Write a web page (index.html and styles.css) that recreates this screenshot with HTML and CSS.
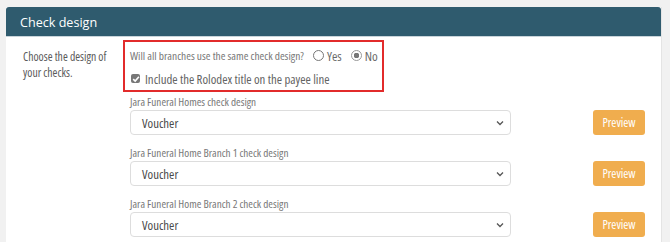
FILE: index.html
```html
<!DOCTYPE html>
<html>
<head>
<meta charset="utf-8">
<link rel="stylesheet" href="styles.css">
</head>
<body>
<div class="card">
  <div class="card-header">Check design</div>
  <div class="card-body">
    <div class="side-label">Choose the design of your checks.</div>
    <div class="main">
      <div class="highlight">
        <div class="q-row">
          <span class="q-text">Will all branches use the same check design?</span>
          <span class="radio-opt"><span class="radio"></span>Yes</span>
          <span class="radio-opt"><span class="radio checked"></span>No</span>
        </div>
        <div class="cb-row">
          <span class="checkbox"><svg width="8" height="8" viewBox="0 0 8 8"><path d="M1.2 4.2 L3.2 6.1 L6.9 1.8" fill="none" stroke="#fff" stroke-width="1.6"/></svg></span>
          <span class="cb-text">Include the Rolodex title on the payee line</span>
        </div>
      </div>
      <div class="group">
        <div class="g-label">Jara Funeral Homes check design</div>
        <div class="g-row">
          <div class="select"><span>Voucher</span><svg class="chev" width="8" height="6" viewBox="0 0 8 6"><path d="M1 1.5 L4 4.5 L7 1.5" fill="none" stroke="#555" stroke-width="1.3"/></svg></div>
          <button class="btn">Preview</button>
        </div>
      </div>
      <div class="group">
        <div class="g-label">Jara Funeral Home Branch 1 check design</div>
        <div class="g-row">
          <div class="select"><span>Voucher</span><svg class="chev" width="8" height="6" viewBox="0 0 8 6"><path d="M1 1.5 L4 4.5 L7 1.5" fill="none" stroke="#555" stroke-width="1.3"/></svg></div>
          <button class="btn">Preview</button>
        </div>
      </div>
      <div class="group">
        <div class="g-label">Jara Funeral Home Branch 2 check design</div>
        <div class="g-row">
          <div class="select"><span>Voucher</span><svg class="chev" width="8" height="6" viewBox="0 0 8 6"><path d="M1 1.5 L4 4.5 L7 1.5" fill="none" stroke="#555" stroke-width="1.3"/></svg></div>
          <button class="btn">Preview</button>
        </div>
      </div>
    </div>
  </div>
</div>
</body>
</html>
```
FILE: styles.css
```css
html, body {
  margin: 0;
  padding: 0;
  background: #f1f1f1;
  font-family: "Open Sans", "Liberation Sans", sans-serif;
  font-stretch: 82%;
  font-weight: 400;
  overflow: hidden;
}
.card {
  margin: 7px 0 0 6px;
  width: 656px;
  background: #fff;
  border-right: 1px solid #e4e4e4;
  box-sizing: border-box;
  height: 240px;
}
.card-header {
  height: 30px;
  background: #2f5b6e;
  color: #fff;
  font-size: 12.6px;
  font-stretch: 100%;
  line-height: 31px;
  padding-left: 14px;
  border-radius: 3px 3px 0 0;
  border-bottom: 1px solid #c9d4da;
  box-sizing: border-box;
}
.card-body {
  display: flex;
  padding-top: 3px;
}
.side-label {
  width: 100px;
  padding-left: 17px;
  padding-top: 8px;
  font-size: 11.7px;
  line-height: 16px;
  color: #5a5a5a;
}
.main {
  display: flex;
  flex-direction: column;
}
.highlight {
  width: 261px;
  height: 52px;
  box-sizing: border-box;
  border: 2px solid #e22b2b;
  padding: 5px 0 0 5px;
  white-space: nowrap;
}
.q-row {
  display: flex;
  align-items: center;
  height: 17px;
}
.q-text {
  font-size: 11.4px;
  color: #777;
  margin-right: 9px;
}
.radio-opt {
  display: flex;
  align-items: center;
  font-size: 13px;
  color: #6a6a6a;
  margin-right: 9px;
}
.radio {
  width: 9px;
  height: 9px;
  border: 1px solid #777;
  border-radius: 50%;
  margin-right: 3px;
  box-sizing: content-box;
}
.radio.checked {
  border-color: #999;
  background: radial-gradient(circle, #777 0 2.6px, #fff 3px);
}
.cb-row {
  display: flex;
  align-items: center;
  margin-top: 6px;
  height: 17px;
}
.checkbox {
  width: 9px;
  height: 9px;
  background: #777;
  border-radius: 2px;
  display: flex;
  align-items: center;
  justify-content: center;
  margin-right: 5px;
  margin-left: 1px;
}
.checkbox svg {
  display: block;
}
.cb-text {
  font-size: 12.8px;
  color: #636363;
}
.group {
  padding-left: 7px;
  margin-bottom: 10px;
}
.highlight + .group {
  margin-top: 2px;
}
.g-label {
  font-size: 11.2px;
  color: #777;
  height: 16px;
  line-height: 16px;
  white-space: nowrap;
}
.g-row {
  display: flex;
  align-items: center;
}
.select {
  width: 381px;
  height: 25px;
  box-sizing: border-box;
  border: 1px solid #ddd;
  border-radius: 4px;
  display: flex;
  align-items: center;
  justify-content: space-between;
  padding: 0 6px 0 11px;
  font-size: 12.8px;
  color: #4a4a4a;
}
.chev {
  display: block;
}
.btn {
  margin-left: 82px;
  width: 52px;
  height: 25px;
  border: none;
  border-radius: 3px;
  background: #f0ad4e;
  color: #fff;
  font-family: "Open Sans", sans-serif;
  font-stretch: 82%;
  font-weight: 400;
  font-size: 12.2px;
  padding: 0;
}
```
